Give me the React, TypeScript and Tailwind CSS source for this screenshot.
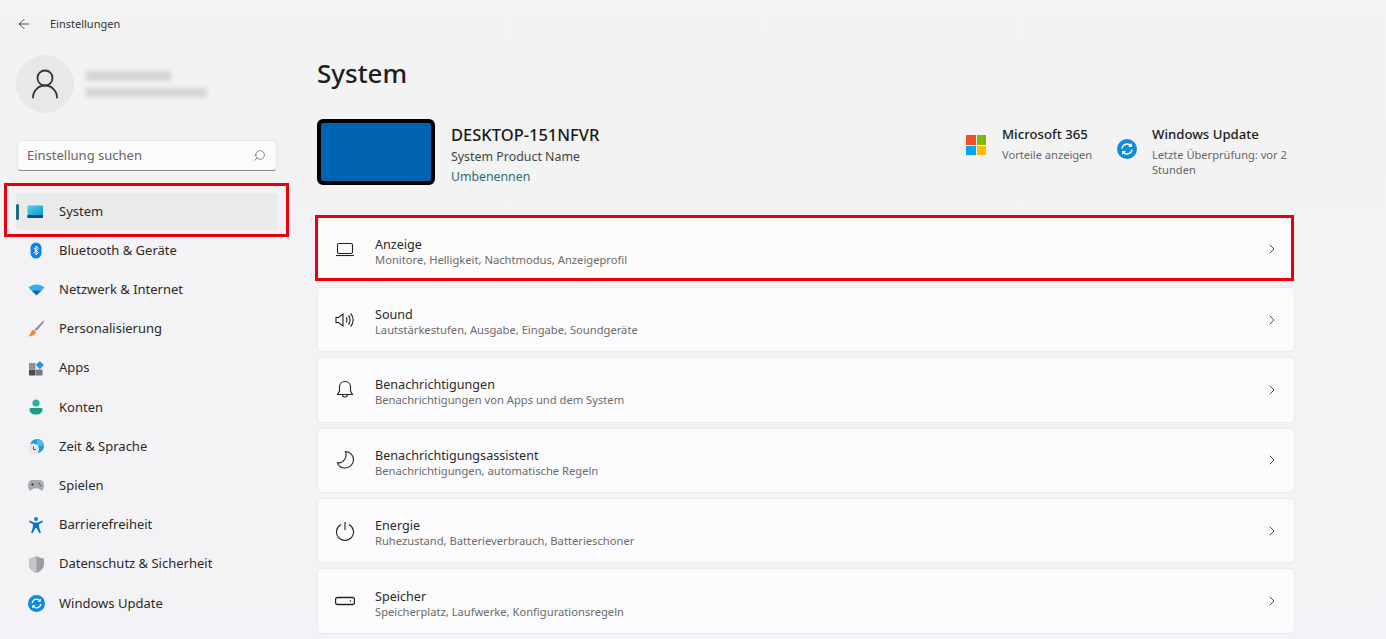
import { ArrowLeft, ChevronRight, Search, UserRound } from 'lucide-react';
import * as React from 'react';

const font = "font-['Noto_Sans','Open_Sans',sans-serif]";

const SystemIcon = () => (
    <svg width="18" height="14" viewBox="0 0 18 14">
        <defs>
            <linearGradient id="sys" x1="0" y1="0" x2="1" y2="1">
                <stop offset="0" stopColor="#4fd0ea" />
                <stop offset="1" stopColor="#0a8fc8" />
            </linearGradient>
        </defs>
        <rect x="0.5" y="0.5" width="15.5" height="12.5" rx="1" fill="url(#sys)" />
        <rect x="0.5" y="10" width="15.5" height="3" fill="#0b4f86" />
    </svg>
);

const BluetoothIcon = () => (
    <svg width="12" height="17" viewBox="0 0 12 17">
        <rect x="0.5" y="0.5" width="11" height="16" rx="5.5" fill="#0a84f0" />
        <path d="M3.5 5.7 8.3 10.6 6 13V4l2.3 2.4-4.800 4.900" fill="none" stroke="#fff" strokeWidth="1" />
    </svg>
);

const WifiIcon = () => (
    <svg width="17" height="12" viewBox="0 0 16 12">
        <path d="M0 3.5C4.5-.6 11.5-.6 16 3.5L13.6 6H2.4z" fill="#25b4f4" />
        <path d="M2.6 6.2h10.8L8 11.6z" fill="#0867b8" />
    </svg>
);

const BrushIcon = () => (
    <svg width="16" height="17" viewBox="0 0 16 17">
        <path d="M15.5.5 6.8 9.2l1.6 1.7L16 2.2z" fill="#8a8d92" />
        <path d="M5.8 9.8 8 12c-.7 2.8-3.600 4.500-7.800 4.400 1.700-1.400 2-2.600 2.700-4.200.6-1.300 1.700-2.200 2.900-2.400z" fill="#f28a2e" />
    </svg>
);

const AppsIcon = () => (
    <svg width="15" height="15" viewBox="0 0 15 15">
        <rect x="0" y="2" width="6.5" height="6" fill="#8e9094" />
        <rect x="0" y="8.5" width="6.5" height="6" fill="#4a4c50" />
        <rect x="7" y="8.5" width="6.5" height="6" fill="#77797d" />
        <path d="M10.8 0 15 4l-4.200 4.200L6.800 4z" fill="#2595e8" />
    </svg>
);

const AccountIcon = () => (
    <svg width="14" height="16" viewBox="0 0 14 16">
        <circle cx="7" cy="4" r="3.6" fill="#2cb09c" />
        <path d="M0.5 10.4C0.5 9.4 1.2 9 2 9h10c.8 0 1.500.4 1.500 1.400 0 3.200-3 5.200-6.500 5.200S.5 13.600.5 10.400z" fill="#16a08c" />
    </svg>
);

const ClockIcon = () => (
    <svg width="16" height="16" viewBox="0 0 16 16">
        <circle cx="9" cy="7" r="7" fill="#1d9bd8" />
        <path d="M9 0a7 7 0 0 1 7 7H9z" fill="#45c0ea" />
        <circle cx="5.5" cy="10" r="5.5" fill="#e7e7e7" />
        <path d="M5.5 7.5V10.500H8" fill="none" stroke="#444" strokeWidth="0.9" />
    </svg>
);

const GameIcon = () => (
    <svg width="16" height="11" viewBox="0 0 16 11">
        <path d="M4 0h8c2.500 0 4 2.500 4 5.500 0 3-1 5-2.500 5-1.500 0-2.200-2-3.500-2H6c-1.300 0-2 2-3.500 2C1 10.500 0 8.500 0 5.500 0 2.500 1.500 0 4 0z" fill="#a8abb0" />
        <path d="M3 4.5h3M4.500 3v3" stroke="#444" strokeWidth="0.9" />
        <circle cx="11" cy="3.5" r="0.9" fill="#2a7fc4" />
        <circle cx="12.5" cy="5.5" r="0.9" fill="#2a7fc4" />
    </svg>
);

const AccessIcon = () => (
    <svg width="14" height="16" viewBox="0 0 14 16">
        <circle cx="7" cy="2" r="1.9" fill="#0f72c6" />
        <path d="M.8 3.400 5 5.600h4l4.200-2.200.7 1.500-3.900 2.300.2 3.300 1.800 5.200-1.700.3L7.500 11h-1l-2.800 5-1.700-.3 1.800-5.200.2-3.300L.1 4.900z" fill="#0f72c6" />
    </svg>
);

const ShieldIcon = () => (
    <svg width="15" height="17" viewBox="0 0 15 17">
        <path d="M7.500 0c2 1.500 4.500 2.300 7.500 2.400V8c0 4.200-3 7.200-7.500 9C3 15.200 0 12.200 0 8V2.400C3 2.300 5.500 1.500 7.500 0z" fill="#9a9da1" />
        <path d="M7.500 0c-2 1.500-4.500 2.300-7.500 2.400V8c0 4.200 3 7.200 7.500 9z" fill="#c4c6c9" />
    </svg>
);

const UpdateIcon = ({ size = 16 }: { size?: number }) => (
    <svg width={size} height={size} viewBox="0 0 20 20">
        <circle cx="10" cy="10" r="10" fill="#0f8ade" />
        <path d="M5 9.500A5 5 0 0 1 14 7" fill="none" stroke="#fff" strokeWidth="1.5" />
        <path d="M15 4v4h-4z" fill="#fff" />
        <path d="M15 10.500A5 5 0 0 1 6 13" fill="none" stroke="#fff" strokeWidth="1.5" />
        <path d="M5 16v-4h4z" fill="#fff" />
    </svg>
);

const OfficeIcon = () => (
    <div className="grid grid-cols-2 gap-px w-5 h-5">
        <div className="bg-[#f25022]" />
        <div className="bg-[#7fba00]" />
        <div className="bg-[#00a4ef]" />
        <div className="bg-[#ffb900]" />
    </div>
);

const stroke = { fill: 'none', stroke: '#222', strokeWidth: 1.1 };

const DisplayGlyph = () => (
    <svg width="20" height="20" viewBox="0 0 20 20" {...stroke}>
        <rect x="2.5" y="4.500" width="15" height="10" rx="1.5" />
        <path d="M1 16.500h18" />
    </svg>
);

const SoundGlyph = () => (
    <svg width="20" height="20" viewBox="0 0 20 20" {...stroke}>
        <path d="M1 7.500h2.500L8 4v12l-4.500-3.500H1z" />
        <path d="M11 7.500a3.500 3.500 0 0 1 0 5M13.300 5.500a6.500 6.500 0 0 1 0 9M15.600 3.500a9.500 9.500 0 0 1 0 13" />
    </svg>
);

const BellGlyph = () => (
    <svg width="20" height="20" viewBox="0 0 20 20" {...stroke}>
        <path d="M10 1.500c3.300 0 5.500 2.500 5.500 5.500v4l2 3.500h-15l2-3.500V7c0-3 2.200-5.500 5.500-5.500z" />
        <path d="M7.500 14.500a2.500 2.500 0 0 0 5 0" />
    </svg>
);

const MoonGlyph = () => (
    <svg width="20" height="20" viewBox="0 0 20 20" {...stroke}>
        <path d="M10.500 1.500c5 .2 8 4.200 8 8.300 0 4.700-4 8.200-8.500 8.200-3.500 0-6.500-2-7.500-5.200 5.500 1 10.200-5.300 8-11.300z" />
    </svg>
);

const PowerGlyph = () => (
    <svg width="20" height="20" viewBox="0 0 20 20" {...stroke}>
        <path d="M10 1v8M6 3.500a8.500 8.500 0 1 0 8 0" />
    </svg>
);

const StorageGlyph = () => (
    <svg width="20" height="20" viewBox="0 0 20 20" {...stroke}>
        <rect x="0.5" y="6.500" width="19" height="7" rx="2" strokeWidth="1.3" />
        <circle cx="15.5" cy="10" r="0.8" fill="#222" stroke="none" />
    </svg>
);

const navItems = [
    { label: 'Bluetooth & Geräte', icon: <BluetoothIcon /> },
    { label: 'Netzwerk & Internet', icon: <WifiIcon /> },
    { label: 'Personalisierung', icon: <BrushIcon /> },
    { label: 'Apps', icon: <AppsIcon /> },
    { label: 'Konten', icon: <AccountIcon /> },
    { label: 'Zeit & Sprache', icon: <ClockIcon /> },
    { label: 'Spielen', icon: <GameIcon /> },
    { label: 'Barrierefreiheit', icon: <AccessIcon /> },
    { label: 'Datenschutz & Sicherheit', icon: <ShieldIcon /> },
    { label: 'Windows Update', icon: <UpdateIcon size={17} /> },
];

const cards = [
    { title: 'Sound', sub: 'Lautstärkestufen, Ausgabe, Eingabe, Soundgeräte', icon: <SoundGlyph /> },
    { title: 'Benachrichtigungen', sub: 'Benachrichtigungen von Apps und dem System', icon: <BellGlyph /> },
    { title: 'Benachrichtigungsassistent', sub: 'Benachrichtigungen, automatische Regeln', icon: <MoonGlyph /> },
    { title: 'Energie', sub: 'Ruhezustand, Batterieverbrauch, Batterieschoner', icon: <PowerGlyph /> },
    { title: 'Speicher', sub: 'Speicherplatz, Laufwerke, Konfigurationsregeln', icon: <StorageGlyph /> },
];

const SettingCard = ({ title, sub, icon, warm }: { title: string; sub: string; icon: React.ReactNode; warm?: boolean }) => (
    <div className={`flex items-center h-[65.4px] shrink-0 pl-[17px] pr-[14px] border border-[#ebebed] rounded-[4px] ${warm ? 'bg-[#fcfbf9]' : 'bg-[#fbfbfd]'}`}>
        <div className="w-[20px] flex justify-center">{icon}</div>
        <div className="ml-[20px] flex-1 pt-[4px]">
            <div className="text-[12.6px] leading-[17px] text-[#2a2a2a]">{title}</div>
            <div className="text-[11.2px] leading-[14px] text-[#6b6b6b]">{sub}</div>
        </div>
        <ChevronRight size={16} strokeWidth={1.2} className="text-[#222]" />
    </div>
);

export default function App() {
    return (
        <div className={`${font} relative flex h-[639px] w-[1386px] overflow-hidden bg-linear-to-b from-[#f3f3f3] to-[#f3f2f6] text-[#1f1f1f]`}>
            <aside className="w-[290px] shrink-0 flex flex-col">
                <div className="flex items-center h-[48px] pl-[16px]">
                    <ArrowLeft size={16} strokeWidth={1.2} />
                    <span className="ml-[18px] text-[11px] text-[#333]">Einstellungen</span>
                </div>
                <div className="flex items-center mt-[7px] ml-[16px]">
                    <div className="flex items-center justify-center w-[58px] h-[58px] rounded-full bg-[#e8e8e8]">
                        <UserRound size={36} strokeWidth={1.2} className="text-[#333]" />
                    </div>
                    <div className="ml-[12px] flex flex-col gap-[7px]">
                        <div className="w-[85px] h-[10px] bg-[#d4d4d6] blur-[2px]" />
                        <div className="w-[121px] h-[9px] bg-[#d4d4d6] blur-[2px]" />
                    </div>
                </div>
                <div className="flex items-center justify-between mt-[27px] ml-[17px] w-[260px] h-[31px] pl-[9px] pr-[10px] bg-[#fbfbfb] border border-[#e6e6e6] border-b-[#8a8a8a] rounded-[4px]">
                    <span className="text-[13px] text-[#666]">Einstellung suchen</span>
                    <Search size={13} strokeWidth={1} className="-scale-x-100 text-[#333]" />
                </div>
                <div className="flex items-center mt-[22px] ml-[16px] w-[262px] h-[37px] bg-[#eaeaea] rounded-[4px] relative">
                    <div className="w-[3px] h-[16px] rounded-full bg-[#1b6a84]" />
                    <div className="ml-[8px] w-[18px] flex justify-center"><SystemIcon /></div>
                    <span className="ml-[14px] text-[13px] text-[#2a2a2a]">System</span>
                </div>
                <nav className="flex flex-col mt-[1px]">
                    {navItems.map((item) => (
                        <div key={item.label} className="flex items-center h-[39.2px] pl-[27px]">
                            <div className="w-[18px] flex justify-center">{item.icon}</div>
                            <span className="ml-[14px] text-[13px] text-[#2a2a2a]">{item.label}</span>
                        </div>
                    ))}
                </nav>
            </aside>
            <main className="flex-1 pl-[27px] pr-[91px]">
                <h1 className="mt-[54px] text-[26px] leading-[38px] font-medium text-[#1f1f1f]">System</h1>
                <div className="flex items-start mt-[27px] h-[66px]">
                    <div className="w-[118px] h-[66px] bg-[#0063b1] border-[4px] border-black rounded-[6px]" />
                    <div className="ml-[16px] flex-1">
                        <div className="text-[16.5px] leading-[22px] font-medium text-[#1a1a1a] mt-[5px]">DESKTOP-151NFVR</div>
                        <div className="text-[12.4px] leading-[18px] text-[#444] mt-[2px]">System Product Name</div>
                        <div className="text-[12.3px] leading-[22px] text-[#2a6e68]">Umbenennen</div>
                    </div>
                    <div className="flex items-center mt-[5px] w-[151px]">
                        <OfficeIcon />
                        <div className="ml-[16px]">
                            <div className="text-[13.2px] leading-[20px] font-medium text-[#1a1a1a]">Microsoft 365</div>
                            <div className="text-[11.1px] leading-[22px] text-[#666]">Vorteile anzeigen</div>
                        </div>
                    </div>
                    <div className="flex items-start mt-[5px] w-[178px]">
                        <div className="mt-[15px]"><UpdateIcon size={20} /></div>
                        <div className="ml-[15px]">
                            <div className="text-[13.2px] leading-[20px] font-medium text-[#1a1a1a]">Windows Update</div>
                            <div className="text-[11.1px] leading-[15px] mt-[3px] text-[#666]">Letzte Überprüfung: vor 2 Stunden</div>
                        </div>
                    </div>
                </div>
                <div className="flex flex-col gap-[5px] mt-[31.5px]">
                    <SettingCard warm title="Anzeige" sub="Monitore, Helligkeit, Nachtmodus, Anzeigeprofil" icon={<DisplayGlyph />} />
                    {cards.map((card) => (
                        <SettingCard key={card.title} {...card} />
                    ))}
                </div>
            </main>
            {/* red annotation boxes over the screenshot */}
            <div className="absolute left-[4px] top-[183px] w-[285px] h-[54px] border-[3px] border-[#e8000d]" />
            <div className="absolute left-[315px] top-[215px] w-[979px] h-[66px] border-[3px] border-[#e8000d]" />
        </div>
    );
}
